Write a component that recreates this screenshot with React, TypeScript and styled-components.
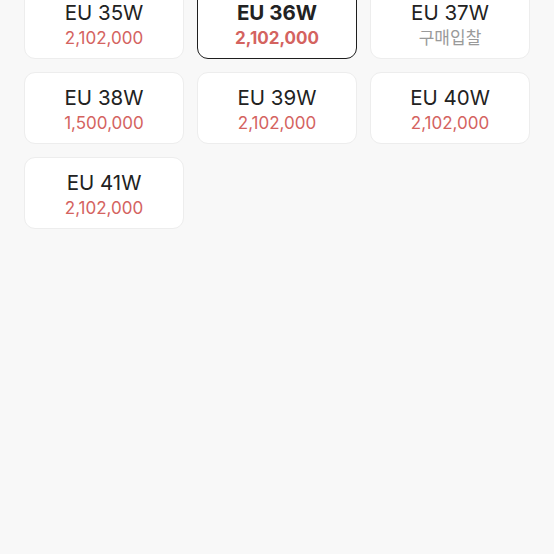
import React from 'react';
import styled, { createGlobalStyle } from 'styled-components';

const GlobalStyle = createGlobalStyle`
  html, body {
    margin: 0;
    padding: 0;
    background: #f8f8f8;
  }
  body {
    font-family: Inter, "Noto Sans", "Noto Sans CJK KR", sans-serif;
    -webkit-font-smoothing: antialiased;
  }
`;

const Page = styled.div`
  width: 554px;
  height: 554px;
  overflow: hidden;
  background: #f8f8f8;
`;

const SizeGrid = styled.div`
  display: grid;
  grid-template-columns: repeat(3, 160px);
  column-gap: 13px;
  row-gap: 13px;
  padding: 0 24px;
  margin-top: -13px;
`;

const SizeCard = styled.div<{ $active?: boolean }>`
  box-sizing: border-box;
  height: 72px;
  background: #fff;
  border: ${({ $active }) => ($active ? '1.5px solid #1e1e1e' : '1px solid #ededed')};
  border-radius: 11px;
  display: flex;
  flex-direction: column;
  align-items: center;
  justify-content: center;
  padding-top: 2px;
`;

const SizeLabel = styled.div<{ $active?: boolean }>`
  font-size: 20.5px;
  line-height: 25px;
  color: #222;
  font-weight: ${({ $active }) => ($active ? 700 : 400)};
`;

const Price = styled.div<{ $active?: boolean; $muted?: boolean }>`
  font-size: 17px;
  line-height: 22px;
  margin-top: 2px;
  color: ${({ $muted }) => ($muted ? '#9a9a9a' : '#d4635f')};
  font-weight: ${({ $active }) => ($active ? 700 : 400)};
`;

type Size = {
  label: string;
  price?: string;
  active?: boolean;
};

const sizes: Size[] = [
  { label: 'EU 35W', price: '2,102,000' },
  { label: 'EU 36W', price: '2,102,000', active: true },
  { label: 'EU 37W' },
  { label: 'EU 38W', price: '1,500,000' },
  { label: 'EU 39W', price: '2,102,000' },
  { label: 'EU 40W', price: '2,102,000' },
  { label: 'EU 41W', price: '2,102,000' },
];

export default function App() {
  return (
    <Page>
      <GlobalStyle />
      <SizeGrid>
        {sizes.map((s) => (
          <SizeCard key={s.label} $active={s.active}>
            <SizeLabel $active={s.active}>{s.label}</SizeLabel>
            {s.price ? (
              <Price $active={s.active}>{s.price}</Price>
            ) : (
              <Price $muted>구매입찰</Price>
            )}
          </SizeCard>
        ))}
      </SizeGrid>
    </Page>
  );
}
